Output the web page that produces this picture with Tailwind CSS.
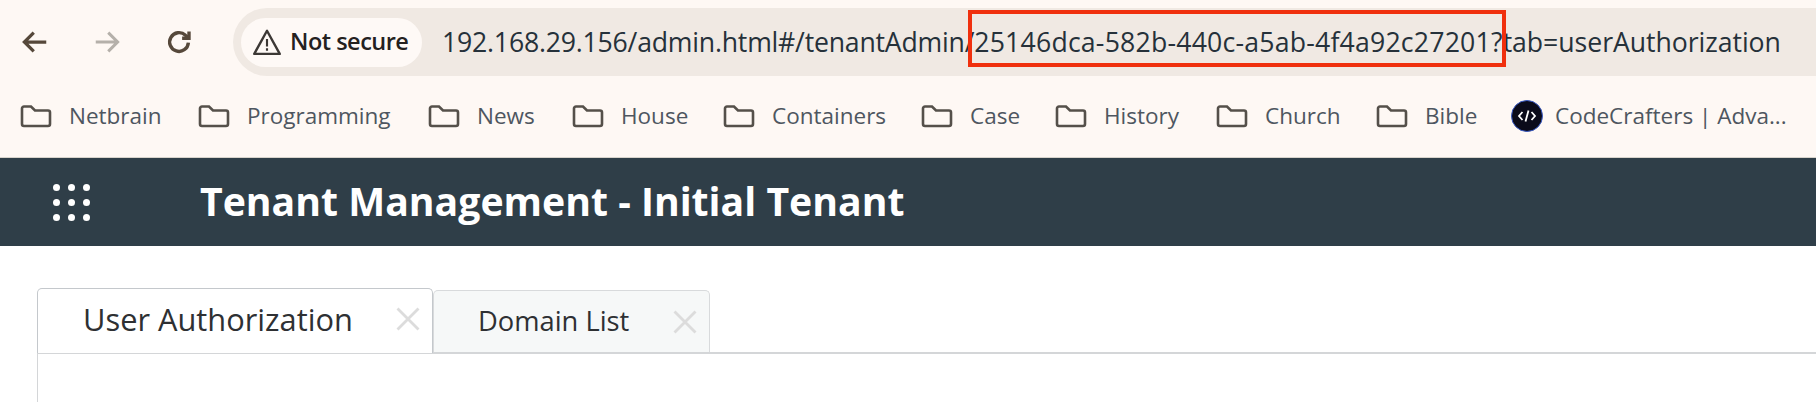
<!DOCTYPE html>
<html lang="en">
<head>
  <meta charset="UTF-8">
  <title>Tenant Management</title>
  <script src="https://cdn.jsdelivr.net/npm/@tailwindcss/browser@4"></script>
</head>
<body class="bg-white w-[1816px] h-[402px] overflow-hidden font-['Open_Sans',sans-serif]">

  <!-- browser chrome -->
  <div class="h-[158px] bg-[#fef8f4] border-b border-[#d8d4cc]">
    <div class="h-[84px] flex items-start pt-[8px]">
      <div class="w-[233px] h-[68px] flex items-center pl-[20px] gap-[32px] shrink-0">
        <svg class="w-[30px] h-[30px]" viewBox="0 0 24 24" fill="none" stroke="#56483a" stroke-width="2.600"><path d="M21 12H4M11 4.500 3.500 12l7.500 7.500"/></svg>
        <svg class="w-[30px] h-[30px] ml-[10px]" viewBox="0 0 24 24" fill="none" stroke="#b5b0aa" stroke-width="2.400"><path d="M3 12h17M13 4.500l7.500 7.500-7.500 7.500"/></svg>
        <svg class="w-[30px] h-[30px] ml-[10px]" viewBox="0 0 24 24" fill="none" stroke="#56483a" stroke-width="2.700"><path d="M19.500 12.500a7.500 7.500 0 1 1-2.300-5.900L20 9"/><path d="M20 3.500V9h-5.500" /></svg>
      </div>
      <div class="relative flex-1 h-[68px] bg-[#f0e9e3] rounded-l-[34px] flex items-center pl-[8px]">
        <div class="w-[181px] h-[49px] rounded-full bg-[#fef9f6] flex items-center pl-[11px] gap-[8px] text-[#24211f] text-[23.500px] font-semibold tracking-[-0.5px]">
          <svg class="w-[30px] h-[28px] shrink-0" viewBox="0 0 24 22" fill="none" stroke="#3c3835" stroke-width="1.900"><path d="M12 2 1.800 20.500h20.400z" stroke-linejoin="round"/><path d="M12 8.500v6M12 16v2" stroke-width="1.700"/></svg>
          <span>Not secure</span>
        </div>
        <span class="ml-[20px] pt-[2px] text-[26.650px] text-[#26313a] whitespace-nowrap tracking-[-0.05px]"><span class="tracking-[-0.21px]">192.168.29.156/admin.html#/tenantAdmin/</span><span class="tracking-[0.2px]">25146dca-582b-440c-a5ab-4f4a92c27201?</span>tab=userAuthorization</span>
        <!-- red highlight drawn over the url -->
        <div class="absolute left-[735px] top-[2px] w-[538px] h-[57px] border-[4px] border-[#f0300e]"></div>
      </div>
    </div>
    <div class="h-[66px] flex items-center pb-[2px] pl-[20px] text-[22.500px] text-[#4e5660] whitespace-nowrap">
      <div class="flex items-center gap-[17px] w-[207px]"><svg class="w-[32px] h-[24px]" viewBox="0 0 32 24" fill="none" stroke="#55504a" stroke-width="2.600"><path d="M2 4.500a2 2 0 0 1 2-2h7l4 4h13a2 2 0 0 1 2 2V20a2 2 0 0 1-2 2H4a2 2 0 0 1-2-2z"/></svg><span>Netbrain</span></div>
      <div class="flex items-center gap-[17px] w-[230px] -ml-[29px]"><svg class="w-[32px] h-[24px]" viewBox="0 0 32 24" fill="none" stroke="#55504a" stroke-width="2.600"><path d="M2 4.500a2 2 0 0 1 2-2h7l4 4h13a2 2 0 0 1 2 2V20a2 2 0 0 1-2 2H4a2 2 0 0 1-2-2z"/></svg><span>Programming</span></div>
      <div class="flex items-center gap-[17px] w-[144px]"><svg class="w-[32px] h-[24px]" viewBox="0 0 32 24" fill="none" stroke="#55504a" stroke-width="2.600"><path d="M2 4.500a2 2 0 0 1 2-2h7l4 4h13a2 2 0 0 1 2 2V20a2 2 0 0 1-2 2H4a2 2 0 0 1-2-2z"/></svg><span>News</span></div>
      <div class="flex items-center gap-[17px] w-[151px]"><svg class="w-[32px] h-[24px]" viewBox="0 0 32 24" fill="none" stroke="#55504a" stroke-width="2.600"><path d="M2 4.500a2 2 0 0 1 2-2h7l4 4h13a2 2 0 0 1 2 2V20a2 2 0 0 1-2 2H4a2 2 0 0 1-2-2z"/></svg><span>House</span></div>
      <div class="flex items-center gap-[17px] w-[198px]"><svg class="w-[32px] h-[24px]" viewBox="0 0 32 24" fill="none" stroke="#55504a" stroke-width="2.600"><path d="M2 4.500a2 2 0 0 1 2-2h7l4 4h13a2 2 0 0 1 2 2V20a2 2 0 0 1-2 2H4a2 2 0 0 1-2-2z"/></svg><span>Containers</span></div>
      <div class="flex items-center gap-[17px] w-[134px]"><svg class="w-[32px] h-[24px]" viewBox="0 0 32 24" fill="none" stroke="#55504a" stroke-width="2.600"><path d="M2 4.500a2 2 0 0 1 2-2h7l4 4h13a2 2 0 0 1 2 2V20a2 2 0 0 1-2 2H4a2 2 0 0 1-2-2z"/></svg><span>Case</span></div>
      <div class="flex items-center gap-[17px] w-[161px]"><svg class="w-[32px] h-[24px]" viewBox="0 0 32 24" fill="none" stroke="#55504a" stroke-width="2.600"><path d="M2 4.500a2 2 0 0 1 2-2h7l4 4h13a2 2 0 0 1 2 2V20a2 2 0 0 1-2 2H4a2 2 0 0 1-2-2z"/></svg><span>History</span></div>
      <div class="flex items-center gap-[17px] w-[160px]"><svg class="w-[32px] h-[24px]" viewBox="0 0 32 24" fill="none" stroke="#55504a" stroke-width="2.600"><path d="M2 4.500a2 2 0 0 1 2-2h7l4 4h13a2 2 0 0 1 2 2V20a2 2 0 0 1-2 2H4a2 2 0 0 1-2-2z"/></svg><span>Church</span></div>
      <div class="flex items-center gap-[17px] w-[135px]"><svg class="w-[32px] h-[24px]" viewBox="0 0 32 24" fill="none" stroke="#55504a" stroke-width="2.600"><path d="M2 4.500a2 2 0 0 1 2-2h7l4 4h13a2 2 0 0 1 2 2V20a2 2 0 0 1-2 2H4a2 2 0 0 1-2-2z"/></svg><span>Bible</span></div>
      <div class="flex items-center gap-[12px]">
        <svg class="w-[32px] h-[32px]" viewBox="0 0 32 32"><circle cx="16" cy="16" r="15.500" fill="#0b0b1a" stroke="#3b5bc4" stroke-width="1"/><path d="M11.500 12 8 16l3.500 4M20.500 12l3.500 4-3.500 4M17.500 10.500l-3 11" fill="none" stroke="#fff" stroke-width="1.800"/></svg>
        <span>CodeCrafters | Adva...</span>
      </div>
    </div>
  </div>

  <!-- app header -->
  <div class="h-[88px] bg-[#2f3e48] flex items-center pl-[53px]">
    <div class="grid grid-cols-3 gap-x-[8px] gap-y-[8px] w-[37px] shrink-0">
      <span class="w-[7px] h-[7px] rounded-full bg-white"></span><span class="w-[7px] h-[7px] rounded-full bg-white"></span><span class="w-[7px] h-[7px] rounded-full bg-white"></span>
      <span class="w-[7px] h-[7px] rounded-full bg-white"></span><span class="w-[7px] h-[7px] rounded-full bg-white"></span><span class="w-[7px] h-[7px] rounded-full bg-white"></span>
      <span class="w-[7px] h-[7px] rounded-full bg-white"></span><span class="w-[7px] h-[7px] rounded-full bg-white"></span><span class="w-[7px] h-[7px] rounded-full bg-white"></span>
    </div>
    <h1 class="ml-[110px] pb-[2px] text-[39.200px] font-bold text-white whitespace-nowrap">Tenant Management - Initial Tenant</h1>
  </div>

  <!-- tabs -->
  <div class="pl-[37px] pt-[43px]">
    <div class="flex items-end h-[65px] border-b-2 border-[#d4d6d8]">
      <div class="w-[396px] h-[65px] -mb-[1px] bg-white border border-b-0 border-[#c4c8cc] rounded-t-[5px] flex items-center pl-[45px] pb-[4px] text-[30.800px] text-[#2e3033]">
        <span class="w-[313px] whitespace-nowrap">User Authorization</span>
        <svg class="w-[24px] h-[24px] shrink-0" viewBox="0 0 24 24" fill="none" stroke="#dcdcdc" stroke-width="2.800"><path d="m1.500 1.500 21 21M22.500 1.500l-21 21"/></svg>
      </div>
      <div class="w-[277px] h-[62px] bg-[#f6f8f8] border border-b-0 border-[#d8dadc] rounded-t-[5px] flex items-center pl-[44px] text-[27.300px] text-[#2e3033]">
        <span class="w-[195px] whitespace-nowrap">Domain List</span>
        <svg class="w-[24px] h-[24px] shrink-0" viewBox="0 0 24 24" fill="none" stroke="#dcdcdc" stroke-width="2.800"><path d="m1.500 1.500 21 21M22.500 1.500l-21 21"/></svg>
      </div>
    </div>
    <div class="h-[60px] border-l border-[#d4d6d8]"></div>
  </div>
</body>
</html>
